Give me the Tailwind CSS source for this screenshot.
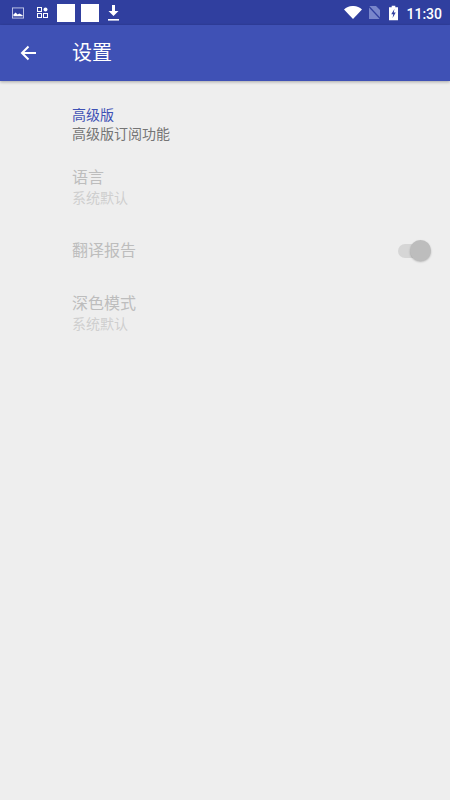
<!DOCTYPE html>
<html><head><meta charset="utf-8"><script src="https://cdn.jsdelivr.net/npm/@tailwindcss/browser@4"></script></head>
<body class="m-0">
<div class="w-[450px] h-[800px] bg-[#eeeeee] flex flex-col overflow-hidden" style="font-family:'Roboto','Noto Sans CJK SC',sans-serif">
  <div class="h-[25px] bg-[#303f9f] flex items-center shrink-0 pl-[12px] pr-[8px]">
    <svg class="w-[12px] h-[12px] mr-[13px]" viewBox="0 0 13 13"><rect x="0.5" y="1" width="12" height="11" fill="none" stroke="#c5cae9" stroke-width="1"/><path d="M1.5 10 L1.5 8 L4 6 L6 8 L8 7 L11.5 9 L11.5 10 Z" fill="#ffffff"/></svg>
    <svg class="w-[11px] h-[11px] mr-[9px]" viewBox="0 0 11 11" fill="none" stroke="#ffffff" stroke-width="1"><rect x="0.5" y="0.5" width="4" height="4"/><circle cx="8.5" cy="2.5" r="2" fill="#ffffff" stroke="none"/><rect x="0.5" y="6.5" width="4" height="4"/><rect x="6.5" y="6.5" width="4" height="4"/></svg>
    <div class="w-[18px] h-[18px] bg-white mr-[6px]"></div>
    <div class="w-[18px] h-[18px] bg-white mr-[9px]"></div>
    <svg class="w-[11px] h-[16px]" viewBox="0 0 11 16" fill="#ffffff"><path d="M4 0h3v6h3.5L5.5 11 .5 6H4z"/><rect x="0" y="14" width="11" height="1.6"/></svg>
    <div class="flex-1"></div>
    <svg class="w-[18px] h-[13px] mr-[6px]" viewBox="0 0 18 13" fill="#ffffff"><path d="M0 3.5C5-1.2 13-1.2 18 3.5L9 13Z"/></svg>
    <svg class="w-[13px] h-[15px] mr-[8px]" viewBox="0 0 13 15"><path d="M1 1h7l4 4v9H1z" fill="#7986cb"/><path d="M0 0.5 L13 14.5" stroke="#303f9f" stroke-width="1.2"/></svg>
    <svg class="w-[9px] h-[16px] mr-[8px]" viewBox="0 0 10 16"><path d="M3 0h4v1.5h3V16H0V1.5h3z" fill="#ffffff"/><path d="M6 3.5 L2.5 9.5 H4.7 L4 13.5 L7.5 7.5 H5.3 Z" fill="#303f9f"/></svg>
    <span class="text-white text-[14px] font-medium leading-none mt-[2px]">11:30</span>
  </div>
  <div class="h-[56px] bg-[#3f51b5] flex items-center shrink-0 shadow-[0_1px_3px_rgba(0,0,0,0.3)] relative">
    <svg class="w-[16px] h-[16px] ml-[20px]" viewBox="0 0 16 16" fill="none" stroke="#ffffff" stroke-width="2"><path d="M16 8H2M8.5 1.5 2 8l6.5 6.5"/></svg>
    <span class="ml-[36px] text-white text-[20px] leading-none">设置</span>
  </div>
  <div class="pl-[72px] pr-[20px] flex flex-col">
    <div class="mt-[24px] text-[#3f51b5] text-[14px] leading-[20px]">高级版</div>
    <div class="mt-[-1px] text-[#757575] text-[14px] leading-[20px]">高级版订阅功能</div>
    <div class="mt-[23px] text-[#bdbdbd] text-[16px] leading-[22px]">语言</div>
    <div class="mt-[-1px] text-[#cfcfcf] text-[14px] leading-[20px]">系统默认</div>
    <div class="mt-[21px] h-[44px] flex items-center justify-between">
      <span class="text-[#bdbdbd] text-[16px] leading-[22px]">翻译报告</span>
      <div class="relative w-[32px] h-[14px] rounded-full bg-[#d6d6d6]">
        <div class="absolute right-[-1px] top-[-4px] w-[21px] h-[21px] rounded-full bg-[#bdbdbd] shadow-[0_1px_2px_rgba(0,0,0,0.25)]"></div>
      </div>
    </div>
    <div class="mt-[20px] text-[#bdbdbd] text-[16px] leading-[22px]">深色模式</div>
    <div class="mt-[-1px] text-[#cfcfcf] text-[14px] leading-[20px]">系统默认</div>
  </div>
</div>
</body></html>
